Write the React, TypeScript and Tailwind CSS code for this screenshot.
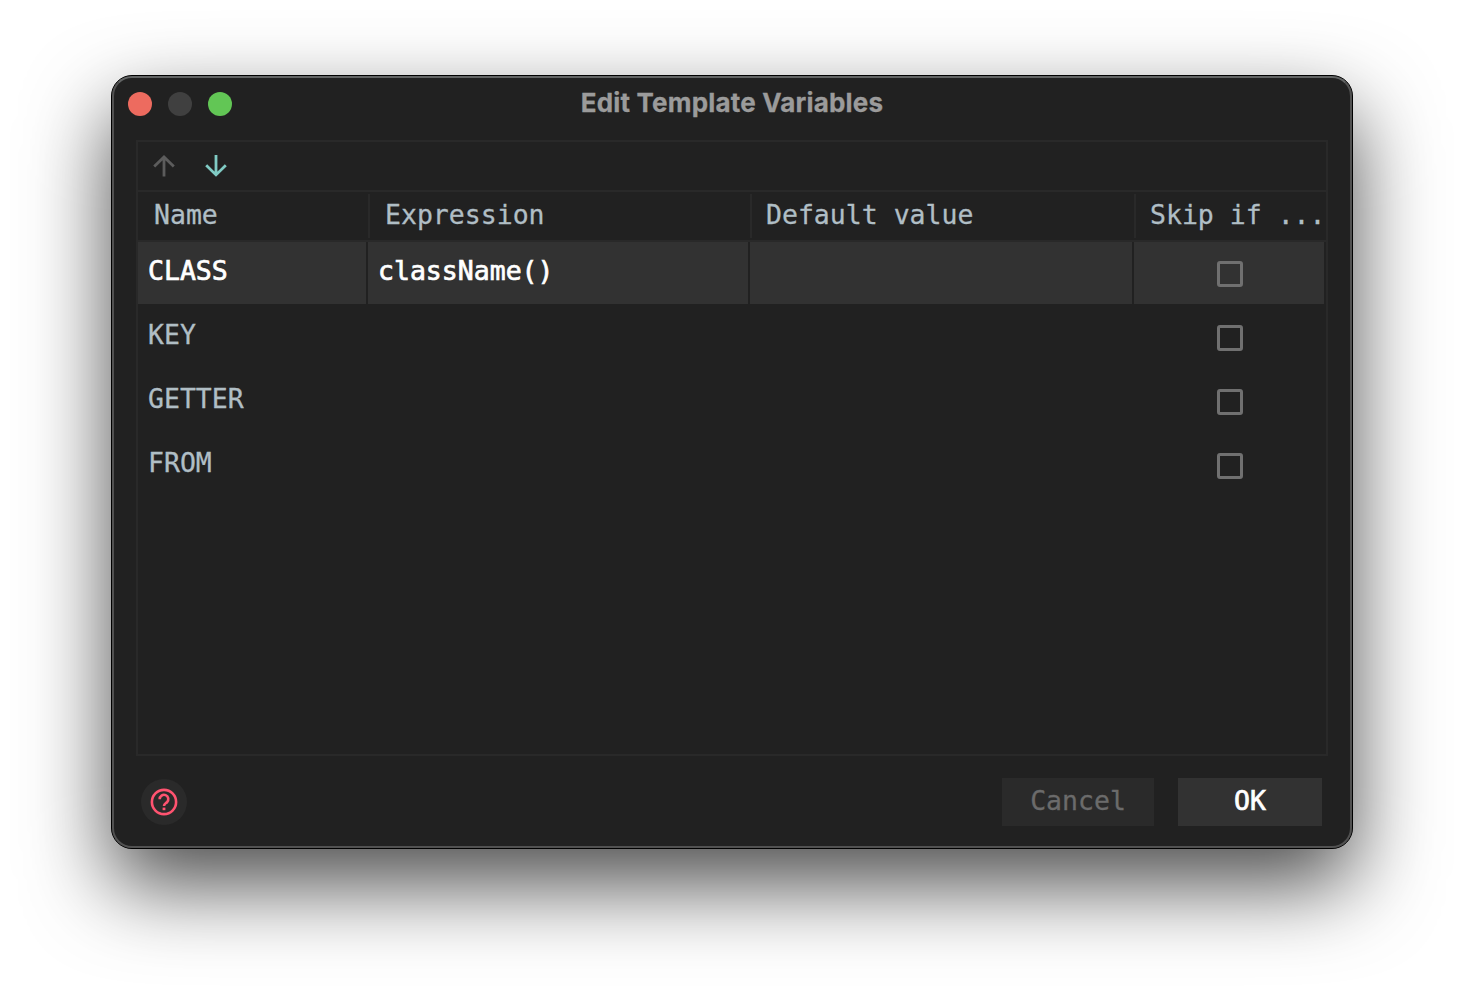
import React from "react";

const columns = ["Name", "Expression", "Default value", "Skip if ..."];

const rows = [
  { name: "CLASS", expression: "className()", selected: true },
  { name: "KEY", expression: "", selected: false },
  { name: "GETTER", expression: "", selected: false },
  { name: "FROM", expression: "", selected: false },
];

const headPad = ["pl-4", "pl-[15px]", "pl-[14px]", "pl-[14px]"];

function Arrow({ up }: { up?: boolean }) {
  return (
    <svg width="24" height="24" viewBox="0 0 24 24" fill="none" stroke="currentColor" strokeWidth="2.8">
      {up ? <path d="M12 22.5V3M2.2 12.6L12 3L21.8 12.6" /> : <path d="M12 1V20.5M2.2 11.3L12 20.9L21.8 11.3" />}
    </svg>
  );
}

export default function App() {
  return (
    <div className="h-[996px] w-[1464px] overflow-hidden bg-white pl-[111px] pt-[75px] font-['DejaVu_Sans_Mono',monospace] text-[26.5px] leading-8 text-[#b0bec5] [-webkit-text-stroke:0.3px_currentColor]">
      <div className="h-[774px] w-[1242px] rounded-[21px] border border-black bg-[#212121] shadow-[0_36px_84px_rgba(0,0,0,0.7)]">
        <div className="flex h-full flex-col rounded-[20px] border-2 border-[#515151] border-t-[#626464] px-[22px]">
          <header className="grid h-[62px] shrink-0 grid-cols-[1fr_auto_1fr] items-start">
            <div className="-ml-2 flex gap-4 pt-[14px]">
              <i className="size-6 rounded-full bg-[#ed6b5f]" />
              <i className="size-6 rounded-full bg-[#404040]" />
              <i className="size-6 rounded-full bg-[#62c655]" />
            </div>
            <h1 className="whitespace-nowrap pt-[9px] font-[Inter,sans-serif] text-[26px] font-bold tracking-[0.18px] text-[#9b9b9b]">
              Edit Template Variables
            </h1>
          </header>

          <main className="flex h-[616px] shrink-0 flex-col border-2 border-[#292929]">
            <div className="flex h-[50px] shrink-0 items-center gap-7 border-b-2 border-[#292929] pl-[14px]">
              <span className="text-[#5c5c5c]"><Arrow up /></span>
              <span className="text-[#80cbc4]"><Arrow /></span>
            </div>
            <div className="grid h-[50px] shrink-0 grid-cols-[232px_382px_384px_1fr] border-b-2 border-[#292929] py-[2px]">
              {columns.map((c, i) => (
                <div
                  key={c}
                  className={`${headPad[i]} ${i < 3 ? "border-r-2 border-[#292929]" : ""} whitespace-nowrap pt-[5px]`}
                >
                  {c}
                </div>
              ))}
            </div>
            {rows.map((r) => {
              const cell = r.selected ? "bg-[#323232] pt-[13px]" : "pt-[13px]";
              return (
                <div
                  key={r.name}
                  className={`mb-[2px] grid h-[62px] shrink-0 grid-cols-[228px_380px_382px_190px] gap-[2px] ${r.selected ? "text-white [-webkit-text-stroke:0.7px_white]" : ""}`}
                >
                  <div className={`${cell} pl-[10px]`}>{r.name}</div>
                  <div className={`${cell} pl-[10px]`}>{r.expression}</div>
                  <div className={cell} />
                  <div className={`${cell} flex justify-center pl-[2px]`}>
                    <span className="mt-[6px] size-[26px] rounded-[3px] border-[3px] border-[#707070]" />
                  </div>
                </div>
              );
            })}
          </main>

          <footer className="flex items-start pt-[22px]">
            <button className="ml-[5px] mt-px flex size-[46px] items-center justify-center rounded-full bg-[#2a2a2a] text-[#ff5370]">
              <svg width="28" height="28" viewBox="0 0 28 28" fill="none" stroke="currentColor" strokeWidth="2.6">
                <circle cx="14" cy="14" r="12.1" />
                <path d="M9.7 11.2a4.3 4.3 0 1 1 7.3 3c-1.5 1.4-3 2-3 3.9" />
                <path d="M12.6 20.9h2.8" />
              </svg>
            </button>
            <button className="ml-auto h-12 w-[152px] bg-[#2a2a2a] pb-[2px] text-[#6b6b6b]">Cancel</button>
            <button className="ml-6 mr-[6px] h-12 w-36 bg-[#323232] pb-[2px] text-white [-webkit-text-stroke:0.7px_white]">OK</button>
          </footer>
        </div>
      </div>
    </div>
  );
}
